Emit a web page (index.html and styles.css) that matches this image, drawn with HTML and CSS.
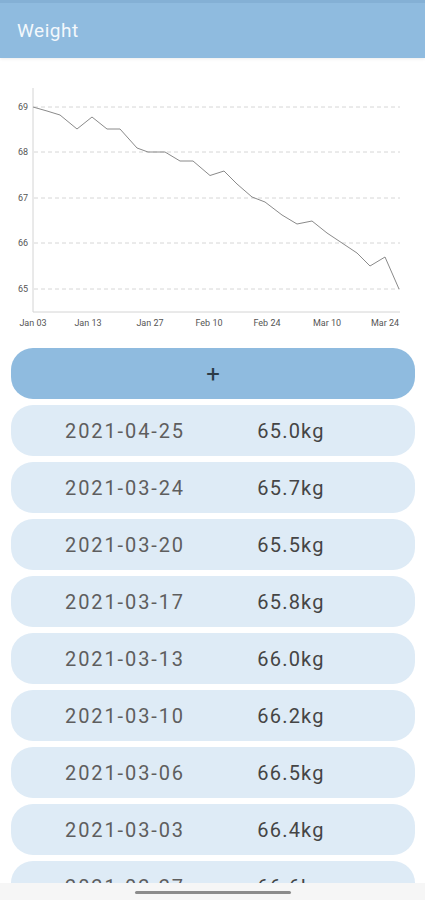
FILE: index.html
```html
<!DOCTYPE html>
<html lang="en">
<head>
  <meta charset="UTF-8">
  <meta name="viewport" content="width=device-width, initial-scale=1.0">
  <title>Weight</title>
  <link rel="stylesheet" href="styles.css">
</head>
<body>

  <header class="app-bar">
    <h1 class="app-title">Weight</h1>
  </header>

  <!-- weight chart -->
  <svg class="chart" viewBox="0 58 425 284" width="425" height="284">
    <g class="grid">
      <line x1="34" y1="107" x2="400" y2="107"/>
      <line x1="34" y1="152" x2="400" y2="152"/>
      <line x1="34" y1="198" x2="400" y2="198"/>
      <line x1="34" y1="243" x2="400" y2="243"/>
      <line x1="34" y1="289" x2="400" y2="289"/>
    </g>
    <g class="axis">
      <line x1="33" y1="88" x2="33" y2="312"/>
      <line x1="33" y1="312" x2="400" y2="312"/>
    </g>
    <g class="y-labels">
      <text x="28" y="110">69</text>
      <text x="28" y="155">68</text>
      <text x="28" y="201">67</text>
      <text x="28" y="246">66</text>
      <text x="28" y="292">65</text>
    </g>
    <g class="x-labels">
      <text x="33" y="326">Jan 03</text>
      <text x="88" y="326">Jan 13</text>
      <text x="150" y="326">Jan 27</text>
      <text x="209" y="326">Feb 10</text>
      <text x="267" y="326">Feb 24</text>
      <text x="327" y="326">Mar 10</text>
      <text x="385" y="326">Mar 24</text>
    </g>
    <polyline class="line" points="33,107 47,111 60,115 77,129 92,117 107,129 120,129 137,148 148,152 165,152 180,161 193,161 210,175.5 224,171 237,184 252,197 265,202 282,215 297,224 312,221 327,233 342,243 357,253 370,266 385,257 399,289"/>
  </svg>

  <div class="entries">
    <button class="add-btn">+</button>

    <div class="entry"><span class="entry-date">2021-04-25</span><span class="entry-weight">65.0kg</span></div>
    <div class="entry"><span class="entry-date">2021-03-24</span><span class="entry-weight">65.7kg</span></div>
    <div class="entry"><span class="entry-date">2021-03-20</span><span class="entry-weight">65.5kg</span></div>
    <div class="entry"><span class="entry-date">2021-03-17</span><span class="entry-weight">65.8kg</span></div>
    <div class="entry"><span class="entry-date">2021-03-13</span><span class="entry-weight">66.0kg</span></div>
    <div class="entry"><span class="entry-date">2021-03-10</span><span class="entry-weight">66.2kg</span></div>
    <div class="entry"><span class="entry-date">2021-03-06</span><span class="entry-weight">66.5kg</span></div>
    <div class="entry"><span class="entry-date">2021-03-03</span><span class="entry-weight">66.4kg</span></div>
    <div class="entry"><span class="entry-date">2021-02-27</span><span class="entry-weight">66.6kg</span></div>
  </div>

  <div class="nav-bar">
    <span class="home-indicator"></span>
  </div>

</body>
</html>
```

FILE: styles.css
```css
html, body {
  height: 100%;
}
body {
  font-family: Roboto, "Noto Sans", sans-serif;
  background-color: #fff;
  margin: 0;
  overflow: hidden;
}
.app-bar {
  height: 55px;
  border-top: 3px solid #84b0d5;
  background-color: #8fbbdf;
  box-shadow: 0 1px 3px rgba(0, 0, 0, 0.08);
  display: flex;
  align-items: center;
  padding-left: 17px;
}
.app-title {
  margin: 0;
  font-size: 19px;
  font-weight: 400;
  letter-spacing: 0.5px;
  color: #f3f8fc;
}
.chart {
  display: block;
}
.grid line {
  stroke: #d6d6d6;
  stroke-width: 1;
  stroke-dasharray: 4 3;
}
.axis line {
  stroke: #d4d4d4;
  stroke-width: 1;
}
.y-labels text {
  font-size: 9px;
  fill: #555;
  text-anchor: end;
}
.x-labels text {
  font-size: 9px;
  fill: #555;
  text-anchor: middle;
}
.line {
  fill: none;
  stroke: #8a8a8a;
  stroke-width: 1;
}
.entries {
  display: flex;
  flex-direction: column;
  gap: 6px;
  padding: 6px 10px 0 11px;
}
.add-btn {
  height: 51px;
  border: none;
  border-radius: 22px;
  background-color: #8fbbdf;
  color: #2c3b47;
  font-family: Roboto, sans-serif;
  font-size: 24px;
  padding: 0;
}
.entry {
  height: 51px;
  border-radius: 22px;
  background-color: #deebf6;
  display: flex;
  align-items: center;
  padding-left: 39px;
  gap: 41px;
  font-size: 20px;
  flex-shrink: 0;
}
.entry-date {
  width: 150px;
  text-align: center;
  color: #5e5e5e;
  letter-spacing: 1.9px;
}
.entry-weight {
  width: 100px;
  text-align: center;
  color: #454545;
  letter-spacing: 1.2px;
}
.nav-bar {
  position: fixed;
  left: 0;
  right: 0;
  bottom: 0;
  height: 17px;
  background-color: #f6f6f6;
  display: flex;
  justify-content: center;
}
.home-indicator {
  width: 156px;
  height: 3px;
  margin-top: 8px;
  border-radius: 2px;
  background-color: #8c8c8c;
}
```
